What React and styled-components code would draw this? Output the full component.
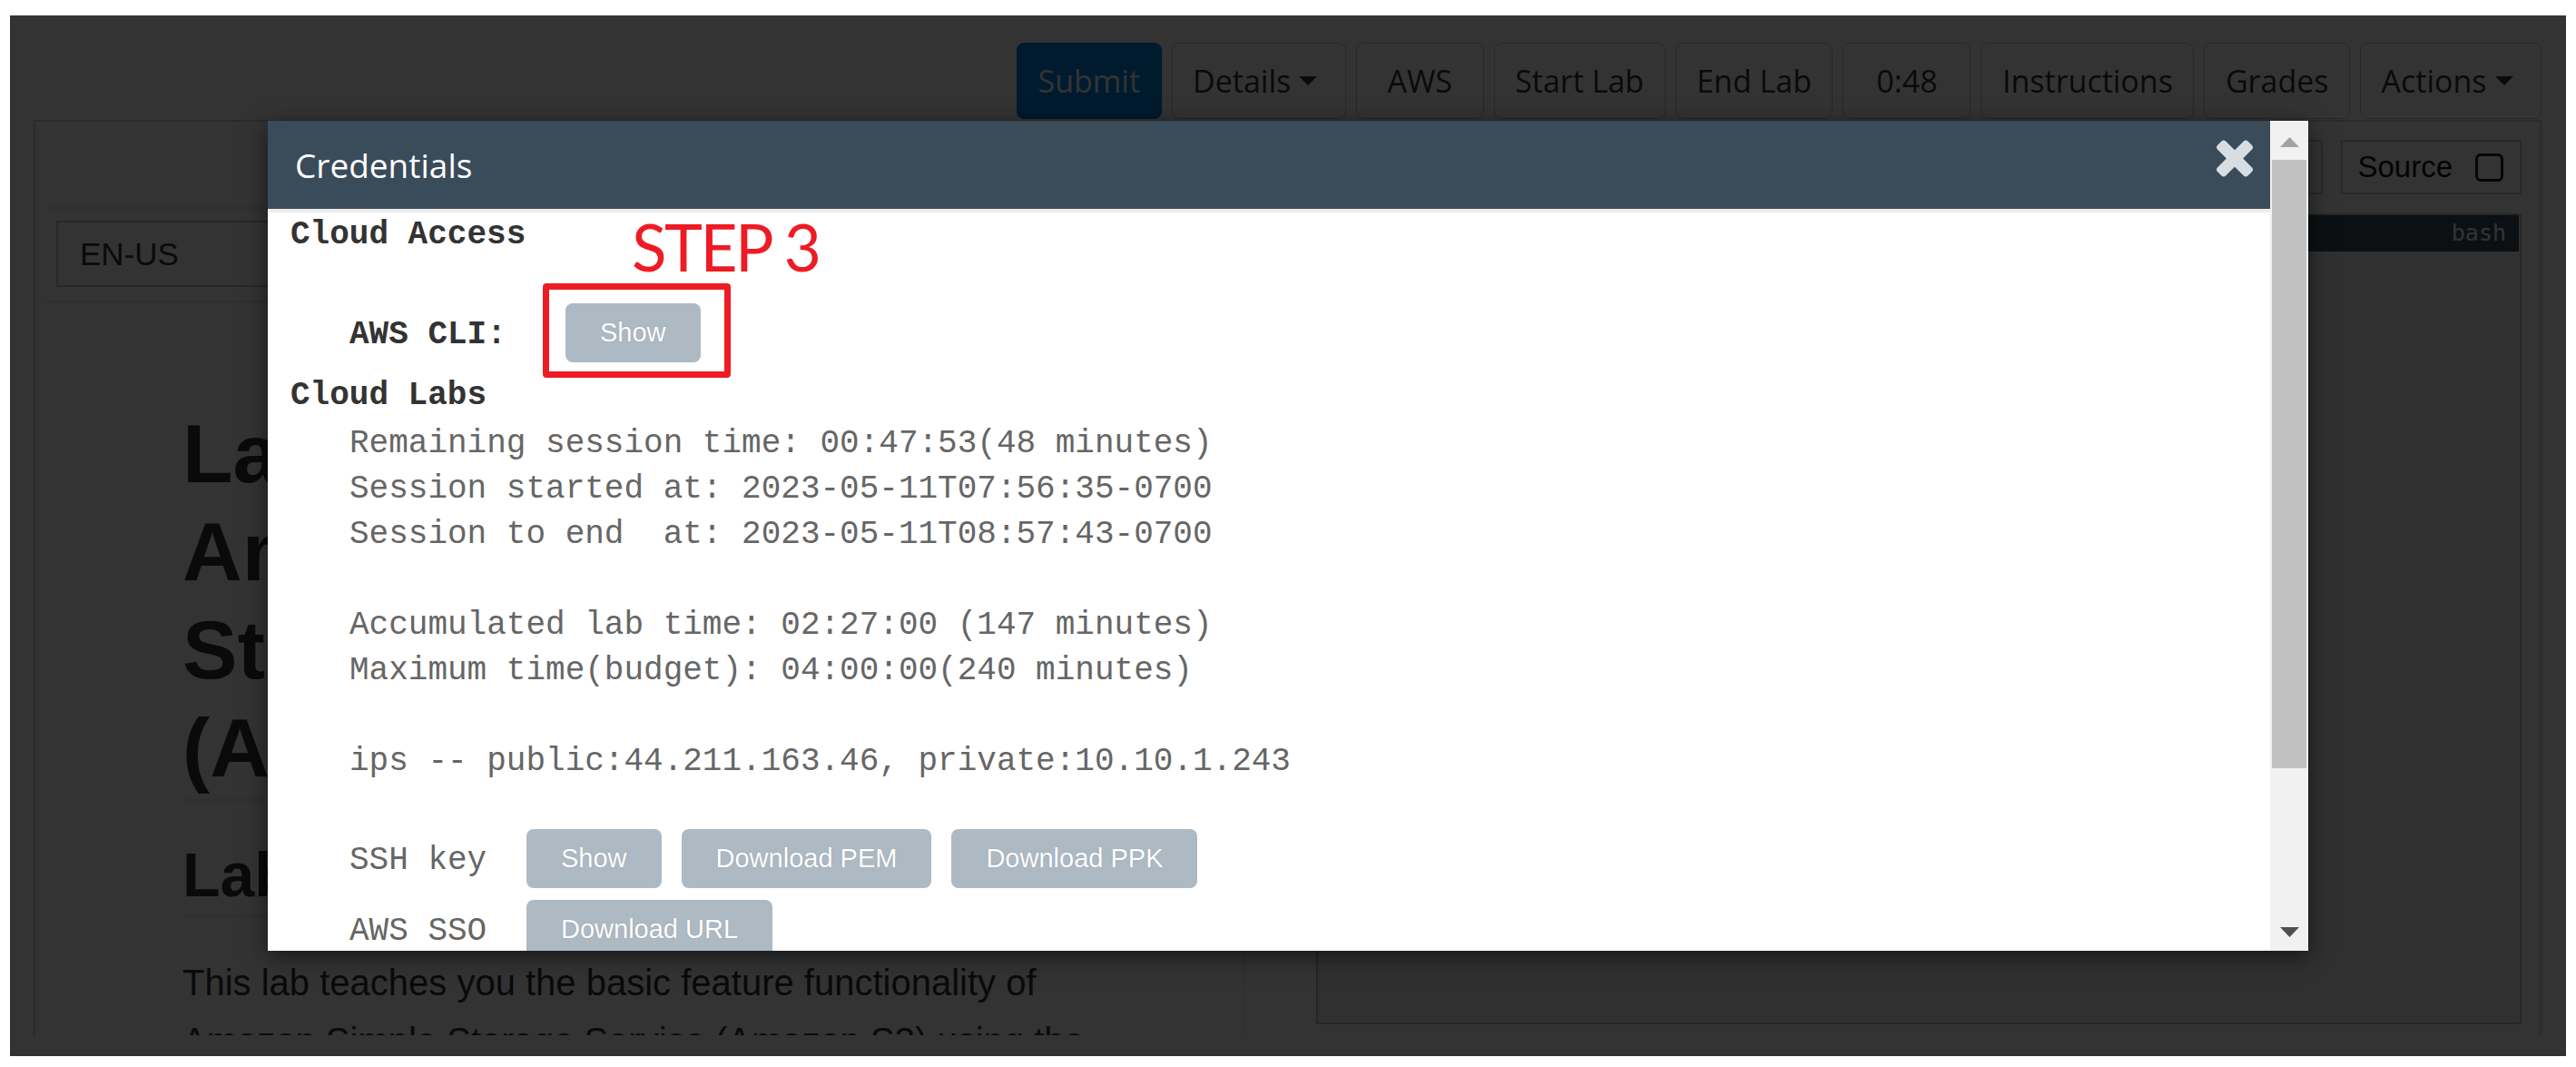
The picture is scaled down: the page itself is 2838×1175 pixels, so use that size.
import React from 'react';
import styled, { createGlobalStyle } from 'styled-components';

const GlobalStyle = createGlobalStyle`
  html, body { margin: 0; padding: 0; background: #ffffff; }
  body { font-family: "Liberation Sans", Arial, sans-serif; }
  *, *::before, *::after { box-sizing: border-box; }
`;

const Frame = styled.div`
  padding: 17px 11px 12px 11px;
  background: #ffffff;
`;

const Viewport = styled.div`
  position: relative;
  width: 2816px;
  height: 1146px;
  overflow: hidden;
  background: #ffffff;
  display: flex;
  flex-direction: column;
`;

/* ---------- underlying page ---------- */

const Toolbar = styled.div`
  flex: 0 0 115px;
  display: flex;
  justify-content: flex-end;
  align-items: flex-start;
  gap: 11px;
  padding: 30px 27px 0 0;
`;

const ToolButton = styled.button`
  height: 84px;
  min-width: 141px;
  padding: 0 22.5px;
  display: inline-flex;
  align-items: center;
  justify-content: center;
  border: 1.5px solid ${(p) => (p.$primary ? '#0082e6' : '#c8c8c8')};
  border-radius: 8px;
  background: ${(p) => (p.$primary ? '#0082e6' : '#ffffff')};
  color: ${(p) => (p.$primary ? '#ffffff' : '#333333')};
  font-family: "Open Sans", "Liberation Sans", sans-serif;
  font-size: 34px;
  line-height: 1;
  white-space: nowrap;
`;

const Caret = styled.span`
  display: inline-block;
  width: 0;
  height: 0;
  margin: 0 8px 0 9px;
  border-top: 10px solid #333333;
  border-left: 10.5px solid transparent;
  border-right: 10.5px solid transparent;
`;

const Workspace = styled.div`
  flex: 0 0 1008px;
  margin: 0 27px 0 26px;
  border: 2px solid #d4d4d4;
  border-bottom: none;
  display: flex;
  overflow: hidden;
`;

const LeftCol = styled.div`
  flex: 0 0 1333px;
  padding: 0 9px;
  border-right: 2px solid #e8e8e8;
  overflow: hidden;
`;

const LeftTop = styled.div`
  height: 96px;
  border-bottom: 2px solid #ececec;
`;

const LangRow = styled.div`
  padding: 13px 14px 15px 14px;
  border-bottom: 2px solid #ececec;
`;

const LangSelect = styled.div`
  width: 640px;
  height: 73px;
  border: 2px solid #c8c8c8;
  padding-left: 24px;
  display: flex;
  align-items: center;
  font-size: 35px;
  color: #333333;
`;

const Article = styled.div`
  padding-left: 153px;
  color: #333333;
`;

const Title = styled.h1`
  margin: 113px 0 0 0;
  padding-bottom: 2px;
  border-bottom: 2px solid #ececec;
  font-size: 91px;
  line-height: 108px;
  font-weight: bold;
  white-space: nowrap;
`;

const Subtitle = styled.h2`
  margin: 44px 0 0 0;
  padding-bottom: 7px;
  border-bottom: 2px solid #ececec;
  font-size: 68px;
  line-height: 75px;
  font-weight: bold;
  white-space: nowrap;
`;

const Para = styled.p`
  margin: 40px 0 0 0;
  width: 1020px;
  font-size: 40px;
  line-height: 64px;
`;

const RightCol = styled.div`
  flex: 1;
  display: flex;
  flex-direction: column;
  padding: 20px 20px 12px 78px;
`;

const RightTop = styled.div`
  display: flex;
  justify-content: flex-end;
  gap: 20px;
`;

const OptionBox = styled.div`
  height: 60px;
  width: ${(p) => (p.$w ? `${p.$w}px` : 'auto')};
  border: 2px solid #cccccc;
  display: flex;
  align-items: center;
  gap: 25px;
  padding: 0 18px 0 16px;
  font-size: 33px;
  color: #111111;
`;

const CheckBox = styled.span`
  width: 31px;
  height: 31px;
  border: 3px solid #222222;
  border-radius: 6px;
`;

const Terminal = styled.div`
  flex: 1;
  margin-top: 21px;
  border: 2px solid #bdbdbd;
  background: #f0f0f0;
`;

const TermBar = styled.div`
  height: 40px;
  margin-right: 1px;
  background: #3d5262;
  color: #ffffff;
  font-family: "DejaVu Sans Mono", "Liberation Mono", monospace;
  font-size: 25px;
  line-height: 40px;
  text-align: right;
  padding-right: 14px;
`;

const Overlay = styled.div`
  position: absolute;
  inset: 0;
  background: rgba(0, 0, 0, 0.8);
`;

/* ---------- modal ---------- */

const Modal = styled.div`
  position: absolute;
  left: 284px;
  top: 116px;
  width: 2248px;
  height: 914px;
  display: flex;
  background: #ffffff;
  box-shadow: 0 6px 24px rgba(0, 0, 0, 0.55);
`;

const ModalMain = styled.div`
  flex: 1;
  min-width: 0;
  display: flex;
  flex-direction: column;
  overflow: hidden;
`;

const ModalHeader = styled.div`
  flex: 0 0 97px;
  display: flex;
  align-items: center;
  justify-content: space-between;
  padding: 0 19px 0 30px;
  background: #3a4b5a;
`;

const ModalTitle = styled.div`
  font-family: "Open Sans", "Liberation Sans", sans-serif;
  font-size: 37px;
  line-height: 52px;
  color: #ffffff;
`;

const CloseIcon = styled.svg`
  align-self: flex-start;
  margin-top: 21px;
  width: 40px;
  height: 41px;
  fill: #d8dde2;
`;

const ModalBody = styled.div`
  flex: 1;
  border-top: 4px solid #ececec;
  padding-left: 25px;
  font-family: "Liberation Mono", "Courier New", monospace;
  font-size: 36px;
  line-height: 50px;
  color: #666666;
`;

const SectionTitle = styled.div`
  margin-top: ${(p) => p.$mt || 0}px;
  font-weight: bold;
  color: #333333;
  white-space: pre;
`;

const CredRow = styled.div`
  display: flex;
  align-items: flex-start;
  gap: 22px;
  margin-top: ${(p) => p.$mt || 0}px;
  padding-left: 65px;
`;

const RowLabel = styled.div`
  flex: 0 0 ${(p) => p.$w}px;
  margin-right: -22px;
  padding-top: 10px;
  white-space: pre;
  font-weight: ${(p) => (p.$bold ? 'bold' : 'normal')};
  color: ${(p) => (p.$bold ? '#333333' : '#666666')};
`;

const CredButton = styled.button`
  height: 65px;
  padding: 0 38px;
  border: none;
  border-radius: 8px;
  background: #adb9c3;
  color: #ffffff;
  font-family: "Liberation Sans", Arial, sans-serif;
  font-size: 29px;
  line-height: 65px;
  white-space: nowrap;
  text-shadow: 0 0 1px rgba(60, 70, 80, 0.35);
`;

const InfoLines = styled.pre`
  margin: 3px 0 0 0;
  padding-left: 65px;
  font: inherit;
  color: #666666;
`;

/* ---------- scrollbar ---------- */

const Scrollbar = styled.div`
  flex: 0 0 42px;
  display: flex;
  flex-direction: column;
  background: #f1f1f1;
`;

const ScrollArrow = styled.div`
  flex: 0 0 ${(p) => p.$h}px;
  display: flex;
  align-items: center;
  justify-content: center;
  padding-top: ${(p) => p.$pt || 0}px;
`;

const Thumb = styled.div`
  flex: 0 0 670px;
  margin: 0 2px;
  background: #c1c1c1;
`;

const Track = styled.div`
  flex: 1;
`;

/* ---------- annotations ---------- */

const RedBox = styled.div`
  position: absolute;
  left: 587px;
  top: 295px;
  width: 207px;
  height: 104px;
  border: 7px solid #ed1c24;
  border-radius: 4px;
`;

const StepLabel = styled.div`
  position: absolute;
  left: 685px;
  top: 219px;
  font-family: Lato, "Open Sans", sans-serif;
  font-size: 71px;
  line-height: 71px;
  letter-spacing: -2.5px;
  color: #ed1c24;
  white-space: nowrap;
`;

const infoText = `Remaining session time: 00:47:53(48 minutes)
Session started at: 2023-05-11T07:56:35-0700
Session to end  at: 2023-05-11T08:57:43-0700

Accumulated lab time: 02:27:00 (147 minutes)
Maximum time(budget): 04:00:00(240 minutes)

ips -- public:44.211.163.46, private:10.10.1.243`;

const toolButtons = [
  { label: 'Submit', primary: true },
  { label: 'Details', caret: true },
  { label: 'AWS' },
  { label: 'Start Lab' },
  { label: 'End Lab' },
  { label: '0:48' },
  { label: 'Instructions' },
  { label: 'Grades' },
  { label: 'Actions', caret: true },
];

const Triangle = ({ up, color }) => (
  <svg width="21" height="11" viewBox="0 0 21 11">
    <polygon points={up ? '10.5,0 21,11 0,11' : '0,0 21,0 10.5,11'} fill={color} />
  </svg>
);

export default function App() {
  return (
    <>
      <GlobalStyle />
      <Frame>
        <Viewport>
          <Toolbar>
            {toolButtons.map((b) => (
              <ToolButton key={b.label} $primary={b.primary}>
                {b.label}
                {b.caret && <Caret />}
              </ToolButton>
            ))}
          </Toolbar>

          <Workspace>
            <LeftCol>
              <LeftTop />
              <LangRow>
                <LangSelect>EN-US</LangSelect>
              </LangRow>
              <Article>
                <Title>
                  Lab: Introduction to
                  <br />
                  Amazon Simple
                  <br />
                  Storage Service
                  <br />
                  (Amazon S3)
                </Title>
                <Subtitle>Lab overview</Subtitle>
                <Para>
                  This lab teaches you the basic feature functionality of Amazon Simple Storage
                  Service (Amazon S3) using the AWS Management Console.
                </Para>
              </Article>
            </LeftCol>
            <RightCol>
              <RightTop>
                <OptionBox $w={160} />
                <OptionBox>
                  Source
                  <CheckBox />
                </OptionBox>
              </RightTop>
              <Terminal>
                <TermBar>bash</TermBar>
              </Terminal>
            </RightCol>
          </Workspace>

          <Overlay />

          <Modal>
            <ModalMain>
              <ModalHeader>
                <ModalTitle>Credentials</ModalTitle>
                <CloseIcon viewBox="110 366 1188 1188">
                  <path d="M1298 1322q0 40-28 68l-136 136q-28 28-68 28t-68-28l-294-294-294 294q-28 28-68 28t-68-28l-136-136q-28-28-28-68t28-68l294-294-294-294q-28-28-28-68t28-68l136-136q28-28 68-28t68 28l294 294 294-294q28-28 68-28t68 28l136 136q28 28 28 68t-28 68l-294 294 294 294q28 28 28 68z" />
                </CloseIcon>
              </ModalHeader>
              <ModalBody>
                <SectionTitle>Cloud Access</SectionTitle>
                <CredRow $mt={50}>
                  <RowLabel $w={238} $bold>AWS CLI:</RowLabel>
                  <CredButton>Show</CredButton>
                </CredRow>
                <SectionTitle $mt={12}>Cloud Labs</SectionTitle>
                <InfoLines>{infoText}</InfoLines>
                <CredRow $mt={49}>
                  <RowLabel $w={195}>SSH key</RowLabel>
                  <CredButton>Show</CredButton>
                  <CredButton>Download PEM</CredButton>
                  <CredButton>Download PPK</CredButton>
                </CredRow>
                <CredRow $mt={13}>
                  <RowLabel $w={195}>AWS SSO</RowLabel>
                  <CredButton>Download URL</CredButton>
                </CredRow>
              </ModalBody>
            </ModalMain>
            <Scrollbar>
              <ScrollArrow $h={43} $pt={4}>
                <Triangle up color="#a3a3a3" />
              </ScrollArrow>
              <Thumb />
              <Track />
              <ScrollArrow $h={42}>
                <Triangle color="#505050" />
              </ScrollArrow>
            </Scrollbar>
          </Modal>

          <RedBox />
          <StepLabel>STEP 3</StepLabel>
        </Viewport>
      </Frame>
    </>
  );
}
